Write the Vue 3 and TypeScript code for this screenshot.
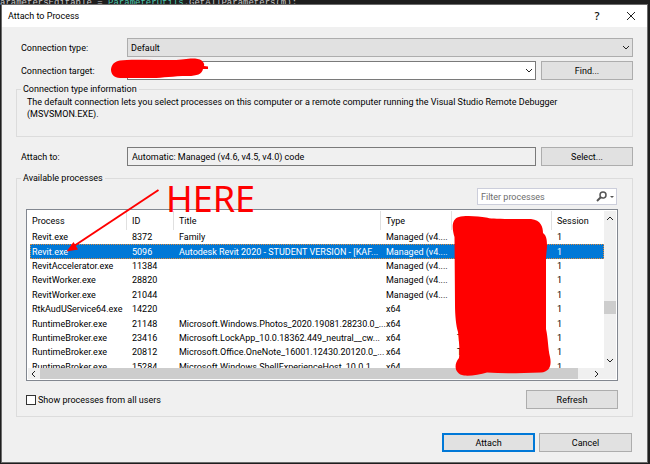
<script setup lang="ts">
import { ref } from 'vue'

interface ProcessRow {
  name: string
  id: number
  title: string
  type: string
  user: string
  session: number
}

const managed = 'Managed (v4....'

const processes: ProcessRow[] = [
  { name: 'Revit.exe', id: 8372, title: 'Family', type: managed, user: '', session: 1 },
  { name: 'Revit.exe', id: 5096, title: 'Autodesk Revit 2020 - STUDENT VERSION - [KAF...', type: managed, user: '', session: 1 },
  { name: 'RevitAccelerator.exe', id: 11384, title: '', type: managed, user: '', session: 1 },
  { name: 'RevitWorker.exe', id: 28820, title: '', type: managed, user: '', session: 1 },
  { name: 'RevitWorker.exe', id: 21044, title: '', type: managed, user: '', session: 1 },
  { name: 'RtkAudUService64.exe', id: 14220, title: '', type: 'x64', user: '', session: 1 },
  { name: 'RuntimeBroker.exe', id: 21148, title: 'Microsoft.Windows.Photos_2020.19081.28230.0_...', type: 'x64', user: '', session: 1 },
  { name: 'RuntimeBroker.exe', id: 23416, title: 'Microsoft.LockApp_10.0.18362.449_neutral__cw...', type: 'x64', user: 'T', session: 1 },
  { name: 'RuntimeBroker.exe', id: 20812, title: 'Microsoft.Office.OneNote_16001.12430.20120.0_...', type: 'x64', user: 'T', session: 1 },
  { name: 'RuntimeBroker.exe', id: 15284, title: 'Microsoft.Windows.ShellExperienceHost_10.0.1...', type: 'x64', user: '', session: 1 },
]

const selectedId = ref(5096)
const connectionType = ref('Default')
const target = ref('')
const attachTo = ref('Automatic: Managed (v4.6, v4.5, v4.0) code')
const filter = ref('')
const showAll = ref(false)
</script>

<template>
  <div class="stage">
    <div class="code">arametersEditable = <span class="type">ParameterUtils</span>.GetAllParameters(m);</div>

    <main class="dialog">
      <header class="titlebar">
        <h1>Attach to Process</h1>
        <button class="caption" type="button" aria-label="Help">?</button>
        <button class="caption" type="button" aria-label="Close">
          <svg width="10" height="10" viewBox="0 0 10 10"><path d="M1 1l8 8M9 1l-8 8" /></svg>
        </button>
      </header>

      <div class="body">
        <div class="row">
          <label for="ctype">Connection type:</label>
          <div class="combo wide">
            <select id="ctype" v-model="connectionType"><option>Default</option></select>
            <svg class="chev" width="8" height="6" viewBox="0 0 8 6"><path d="M1 1l3 3 3-3" /></svg>
          </div>
        </div>

        <div class="row second">
          <label for="ctarget">Connection target:</label>
          <div class="combo">
            <input id="ctarget" v-model="target" type="text" />
            <svg class="chev" width="8" height="6" viewBox="0 0 8 6"><path d="M1 1l3 3 3-3" /></svg>
          </div>
          <button class="btn" type="button">Find...</button>
        </div>

        <fieldset class="info">
          <legend>Connection type information</legend>
          <p>The default connection lets you select processes on this computer or a remote computer running the Visual Studio Remote Debugger (MSVSMON.EXE).</p>
        </fieldset>

        <div class="row attach">
          <label for="attach">Attach to:</label>
          <input id="attach" v-model="attachTo" class="readonly" type="text" readonly />
          <button class="btn" type="button">Select...</button>
        </div>

        <fieldset class="available">
          <legend>Available processes</legend>
          <div class="filter">
            <input v-model="filter" type="text" placeholder="Filter processes" aria-label="Filter processes" />
            <svg width="20" height="12" viewBox="0 0 20 12">
              <circle cx="7" cy="4" r="3" fill="none" stroke="#555" stroke-width="1.5" />
              <path d="M5 6L1 10" stroke="#555" stroke-width="2" />
              <path d="M14 5h4l-2 2z" fill="#555" />
            </svg>
          </div>

          <div class="list">
            <div class="upper">
              <div class="view">
                <table>
                  <colgroup>
                    <col class="c-name" /><col class="c-id" /><col class="c-title" />
                    <col class="c-type" /><col class="c-user" /><col class="c-session" />
                  </colgroup>
                  <thead>
                    <tr><th>Process</th><th>ID</th><th>Title</th><th>Type</th><th></th><th>Session</th></tr>
                  </thead>
                  <tbody>
                    <tr v-for="p in processes" :key="p.id" :class="{ selected: p.id === selectedId }" @click="selectedId = p.id">
                      <td>{{ p.name }}</td>
                      <td>{{ p.id }}</td>
                      <td>{{ p.title }}</td>
                      <td>{{ p.type }}</td>
                      <td>{{ p.user }}</td>
                      <td>{{ p.session }}</td>
                    </tr>
                  </tbody>
                </table>
              </div>
              <div class="vbar">
                <svg width="8" height="6" viewBox="0 0 8 6"><path d="M1 5l3-3 3 3" /></svg>
                <span class="vthumb"></span>
                <svg width="8" height="6" viewBox="0 0 8 6"><path d="M1 1l3 3 3-3" /></svg>
              </div>
            </div>
            <div class="hbar">
              <svg width="6" height="8" viewBox="0 0 6 8"><path d="M5 1l-3 3 3 3" /></svg>
              <span class="hthumb"></span>
              <svg width="6" height="8" viewBox="0 0 6 8"><path d="M1 1l3 3-3 3" /></svg>
            </div>
          </div>

          <div class="under">
            <label class="check"><input v-model="showAll" type="checkbox" />Show processes from all users</label>
            <button class="btn" type="button">Refresh</button>
          </div>
        </fieldset>

        <footer class="actions">
          <button class="btn primary" type="button">Attach</button>
          <button class="btn" type="button">Cancel</button>
        </footer>
      </div>
    </main>

    <svg class="marks" width="650" height="464" viewBox="0 0 650 464">
      <path d="M120 60.500C128 59 150 60 173 60C183 60 188 58 195 58.500C203 59 205 64 204 66L208 66.500V69H203C202 74 197 76 188 76C172 76 164 78 152 78H120C108 78 108 62 120 60.500Z" />
      <path d="M459 217C464 215 479 216 486 217.500C491 219 500 219 531 219C541 220 543 227 543 233C547 236 547 241 547 247L546 257V329C548 337 548 349 550 357C552 366 549 372 541 372.500C522 373 505 374 487 372.500C480 375 470 376 464 375.500C455 374 453 365 459 358C460 350 459 342 458 332C456 326 455 315 455 305L454.500 237C452 229 451 219 459 217Z" />
      <path class="shaft" d="M158.500 190L74 246" />
      <path d="M66.500 251.500L73.500 242L78 249.500Z" />
      <text x="166" y="212">HERE</text>
    </svg>
  </div>
</template>

<style>
body {
  margin: 0;
  background: #1e1e1e;
}
</style>

<style scoped>
* {
  box-sizing: border-box;
}

.stage {
  position: relative;
  min-height: 100vh;
  padding: 4px 2px 1px 1px;
  display: flex;
  flex-direction: column;
  overflow: hidden;
  background: #1e1e1e;
  color: #000;
  font: 9px/12px Roboto, 'Open Sans', sans-serif;
}

.code {
  height: 10px;
  margin: -8px 0 -2px -1px;
  padding-top: 2px;
  font: 9px/10px 'Liberation Mono', monospace;
  white-space: pre;
  color: #c8c8c8;
}

.type {
  color: #4ec9b0;
}

.dialog {
  position: relative;
  flex: 1;
  border: 1px solid #6b6b6b;
  background: #f0f0f0;
}

.titlebar {
  display: flex;
  align-items: center;
  height: 22px;
  padding: 0 5px 0 6px;
  background: #fff;
}

h1 {
  flex: 1;
  margin: 0;
  font-size: 9px;
  font-weight: 400;
}

.caption {
  display: flex;
  align-items: center;
  justify-content: center;
  width: 22px;
  height: 20px;
  margin-left: 12px;
  padding: 0;
  border: 0;
  background: none;
  color: #111;
  font: 600 11px/12px 'Open Sans', sans-serif;
}

svg path {
  fill: none;
  stroke: #222;
}

.body {
  padding: 11px 14px 10px;
}

.row {
  display: grid;
  grid-template-columns: 106px 1fr 92px;
  align-items: center;
  padding-left: 5px;
}

.second {
  margin-top: 4px;
}

.combo {
  display: flex;
  align-items: center;
  height: 19px;
  margin-right: 5px;
  padding-right: 2px;
  border: 1px solid #7a7a7a;
  background: #fff;
}

.combo.wide {
  grid-column: 2 / 4;
  margin-right: 0;
  border-color: #adadad;
  background: #e1e1e1;
}

.combo select,
.combo input {
  flex: 1;
  min-width: 0;
  height: 100%;
  padding: 0 3px;
  border: 0;
  outline: 0;
  appearance: none;
  background: transparent;
  color: #000;
  font: inherit;
}

.btn {
  width: 92px;
  height: 19px;
  padding: 0;
  border: 1px solid #adadad;
  background: #e1e1e1;
  color: #000;
  font: inherit;
}

fieldset {
  min-width: 0;
  margin: 0;
  padding: 0;
  border: 1px solid #dcdcdc;
}

legend {
  margin-left: 4px;
  padding: 0 2px;
}

.info {
  height: 54px;
  margin-top: 3px;
}

.info p {
  margin: 0;
  padding: 1px 40px 0 10px;
}

.attach {
  margin-top: 10px;
}

.readonly {
  width: auto;
  min-width: 0;
  height: 19px;
  margin-right: 5px;
  padding: 0 4px;
  border: 1px solid #7a7a7a;
  outline: 0;
  background: #f0f0f0;
  color: #000;
  font: inherit;
}

.available {
  margin-top: 6px;
  padding: 4px 14px 7px 9px;
}

.available legend {
  margin-left: -5px;
}

.filter {
  display: flex;
  align-items: center;
  width: 140px;
  height: 17px;
  margin: 0 1px 0 auto;
  border: 1px solid #cccedb;
  background: #fff;
}

.filter input {
  flex: 1;
  min-width: 0;
  height: 15px;
  padding: 0 3px;
  border: 0;
  outline: 0;
  background: transparent;
  font: inherit;
}

.filter input::placeholder {
  color: #6d6d6d;
}

.filter svg path {
  stroke: #555;
}

.filter svg path:last-child {
  fill: #555;
  stroke: none;
}

.list {
  margin-top: 4px;
  padding: 1px 1px 1px 3px;
  border: 1px solid #828790;
  background: #fff;
}

.upper {
  display: flex;
  height: 157px;
}

.view {
  flex: 1;
  overflow: hidden;
}

table {
  width: 100%;
  height: 163px;
  table-layout: fixed;
  border-collapse: separate;
  border-spacing: 0;
}

.c-name {
  width: 97px;
}

.c-id {
  width: 47px;
}

.c-title {
  width: 207px;
}

.c-type {
  width: 71px;
}

.c-user {
  width: 100px;
}

th,
td {
  padding: 0 0 0 5px;
  text-align: left;
  font-weight: 400;
  white-space: nowrap;
  vertical-align: middle;
}

th {
  height: 19px;
  border-right: 1px solid #e0e0e0;
}

th:last-child {
  border-right: 0;
}

th:first-child,
td:first-child {
  padding-left: 2px;
}

.selected td {
  background: #0078d7;
  color: #fff;
}

.selected {
  outline: 1px dotted #e08a3c;
  outline-offset: -1px;
}

.vbar {
  display: flex;
  flex-direction: column;
  align-items: center;
  width: 12px;
  padding: 4px 0;
  background: #f0f0f0;
}

.vthumb {
  width: 12px;
  height: 13px;
  margin: auto 0 44px;
  background: #cdcdcd;
}

.hbar {
  display: flex;
  align-items: center;
  height: 11px;
  margin-left: -2px;
  padding: 0 16px 0 2px;
  background: #f0f0f0;
}

.hthumb {
  flex: 1;
  height: 11px;
  margin: 0 16px 0 4px;
  background: #cdcdcd;
}

.under {
  display: flex;
  align-items: center;
  justify-content: space-between;
  margin-top: 9px;
}

.check {
  display: flex;
  align-items: center;
  gap: 2px;
}

.check input {
  width: 10px;
  height: 10px;
  margin: 0;
  appearance: none;
  border: 1px solid #333;
  background: #fff;
}

.check input:checked {
  background: #0078d7;
}

.actions {
  display: flex;
  justify-content: flex-end;
  gap: 4px;
  margin: 16px 1px 0 0;
}

.actions .btn {
  width: 93px;
}

.actions .primary {
  border: 2px solid #0078d7;
}

.marks {
  position: absolute;
  top: 0;
  left: 0;
  pointer-events: none;
}

.marks path {
  fill: #f00;
  stroke: none;
}

.marks .shaft {
  fill: none;
  stroke: #f00;
  stroke-width: 2;
}

.marks text {
  fill: #f00;
  font: 36px 'Noto Sans', 'Open Sans', sans-serif;
}
</style>
